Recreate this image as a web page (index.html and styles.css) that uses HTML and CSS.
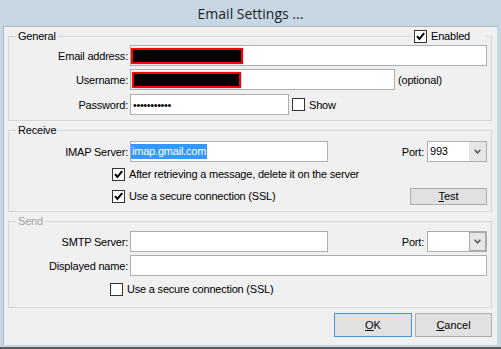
FILE: index.html
```html
<!DOCTYPE html>
<html lang="en">
<head>
    <meta charset="UTF-8">
    <title>Email Settings</title>
    <link rel="stylesheet" href="styles.css">
</head>
<body>
    <div class="window">
        <div class="titlebar">Email Settings ...</div>
        <div class="client">
            <fieldset class="group general">
                <legend>General</legend>
                <label class="check enabled">
                    <span class="box"><svg width="11" height="11" viewBox="0 0 11 11"><path d="M2 5.2 L4.4 8 L9.2 2.2" /></svg></span>Enabled
                </label>
                <div class="row">
                    <span class="label">Email address:</span>
                    <div class="field email"><span class="redact redact-email"></span></div>
                </div>
                <div class="row">
                    <span class="label">Username:</span>
                    <div class="field username"><span class="redact redact-user"></span></div>
                    <span class="hint">(optional)</span>
                </div>
                <div class="row row-pass">
                    <span class="label">Password:</span>
                    <div class="field password"><span class="dots">•••••••••••</span></div>
                    <label class="check show"><span class="box"></span>Show</label>
                </div>
            </fieldset>

            <fieldset class="group receive">
                <legend>Receive</legend>
                <div class="row">
                    <span class="label">IMAP Server:</span>
                    <div class="field server"><span class="selected">imap.gmail.com</span></div>
                    <div class="port">
                        <span>Port:</span>
                        <div class="combo">
                            <span class="combo-value">993</span>
                            <span class="combo-btn"><svg width="7" height="5" viewBox="0 0 7 5"><path d="M0.6 0.8 L3.5 3.8 L6.4 0.8" /></svg></span>
                        </div>
                    </div>
                </div>
                <div class="check-row first">
                    <label class="check"><span class="box"><svg width="11" height="11" viewBox="0 0 11 11"><path d="M2 5.2 L4.4 8 L9.2 2.2" /></svg></span>After retrieving a message, delete it on the server</label>
                </div>
                <div class="check-row second">
                    <label class="check"><span class="box"><svg width="11" height="11" viewBox="0 0 11 11"><path d="M2 5.2 L4.4 8 L9.2 2.2" /></svg></span>Use a secure connection (SSL)</label>
                    <button class="btn test"><u>T</u>est</button>
                </div>
            </fieldset>

            <fieldset class="group send">
                <legend>Send</legend>
                <div class="row">
                    <span class="label">SMTP Server:</span>
                    <div class="field server"></div>
                    <div class="port">
                        <span>Port:</span>
                        <div class="combo">
                            <span class="combo-value"></span>
                            <span class="combo-btn dark"><svg width="7" height="5" viewBox="0 0 7 5"><path d="M0.6 0.8 L3.5 3.8 L6.4 0.8" /></svg></span>
                        </div>
                    </div>
                </div>
                <div class="row">
                    <span class="label">Displayed name:</span>
                    <div class="field display-name"></div>
                </div>
                <div class="check-row send-ssl">
                    <label class="check"><span class="box"></span>Use a secure connection (SSL)</label>
                </div>
            </fieldset>

            <div class="actions">
                <button class="btn default"><u>O</u>K</button>
                <button class="btn"><u>C</u>ancel</button>
            </div>
        </div>
    </div>
</body>
</html>
```

FILE: styles.css
```css
body {
    margin: 0;
    font-family: "Liberation Sans", Arial, sans-serif;
    font-size: 11px;
    letter-spacing: -0.2px;
    color: #000;
}
.window {
    width: 501px;
    height: 349px;
    box-sizing: border-box;
    background: #c6d6e3;
    border-bottom: 2px solid #595959;
    display: flex;
    flex-direction: column;
}
.titlebar {
    height: 26px;
    display: flex;
    align-items: center;
    justify-content: center;
    font-family: "Open Sans", sans-serif;
    font-size: 14px;
    letter-spacing: 0;
    color: #1f1f1f;
}
.client {
    flex: 1;
    margin: 0 4px 2px 3px;
    background: #f0f0f0;
    border-top: 1px solid #a9b6c2;
    border-left: 1px solid #a9b6c2;
    padding: 3px 5px 0 4px;
}
.group {
    margin: 0;
    padding: 2px 4px 5px 0;
    border: 1px solid #d5d5d5;
    position: relative;
    min-width: 0;
}
.group + .group { margin-top: 3px; }
.group legend {
    margin-left: 7px;
    padding: 0 2px;
    line-height: 13px;
}
.receive { padding-top: 4px; padding-bottom: 6px; }
.send { padding-top: 3px; padding-bottom: 9px; }
.send legend { color: #a0a0a0; }

.row {
    display: flex;
    align-items: center;
    height: 21px;
}
.row + .row { margin-top: 3px; }
.row-pass { margin-top: 4px !important; }
.label {
    width: 119px;
    text-align: right;
    margin-right: 2px;
    flex-shrink: 0;
}
.field {
    height: 21px;
    box-sizing: border-box;
    border: 1px solid #abadb3;
    background: #fff;
    display: flex;
    align-items: center;
    padding-left: 0;
}
.email { width: 358px; }
.username { width: 265px; }
.password { width: 159px; }
.server { width: 198px; }
.display-name { width: 357px; }

.redact {
    display: block;
    height: 16px;
    box-sizing: border-box;
    background: #000;
    border: 2px solid #f00;
    box-shadow: 0 0 1px #ff5050;
}
.redact-email { width: 112px; }
.redact-user { width: 109px; margin-left: 1px; margin-top: 1px; }
.dots { padding-left: 2px; letter-spacing: -0.4px; }
.selected {
    background: #3399ff;
    color: #fff;
    line-height: 15px;
    padding: 0 1px;
}
.hint { margin-left: 3px; }

.check {
    display: flex;
    align-items: center;
}
.box {
    width: 13px;
    height: 13px;
    box-sizing: border-box;
    border: 1px solid #333;
    background: #fff;
    margin-right: 4px;
    display: flex;
}
.box svg path {
    fill: none;
    stroke: #000;
    stroke-width: 2;
}
.show { margin-left: 3px; }
.enabled {
    position: absolute;
    top: -14px;
    right: 6px;
    padding: 0 15px 0 3px;
    background: #f0f0f0;
    height: 14px;
}

.port {
    margin-left: auto;
    display: flex;
    align-items: center;
}
.combo {
    width: 60px;
    height: 21px;
    box-sizing: border-box;
    margin-left: 3px;
    border: 1px solid #abadb3;
    background: #fff;
    display: flex;
}
.combo-value {
    flex: 1;
    padding-left: 2px;
    line-height: 19px;
}
.combo-btn {
    width: 17px;
    background: #e6e6e6;
    display: flex;
    align-items: center;
    justify-content: center;
}
.combo-btn.dark { box-shadow: inset 0 0 0 1px #a8a8a8; }
.combo-btn svg path {
    fill: none;
    stroke: #555;
    stroke-width: 1.5;
}

.check-row {
    display: flex;
    align-items: center;
    height: 18px;
    padding-left: 103px;
}
.check-row.first { margin-top: 3px; }
.check-row.second { margin-top: 4px; }
.check-row.send-ssl { margin-top: 4px; padding-left: 101px; }

.btn {
    font-family: inherit;
    font-size: 11px;
    letter-spacing: 0;
    color: #000;
    background: #e1e1e1;
    border: 1px solid #adadad;
    padding: 0;
}
.btn.test {
    margin-left: auto;
    width: 77px;
    height: 17px;
}
.actions {
    display: flex;
    justify-content: flex-end;
    gap: 3px;
    margin-top: 5px;
}
.actions .btn {
    width: 78px;
    height: 24px;
}
.actions .btn + .btn { width: 77px; }
.btn.default { border-color: #3c97e6; }
```
